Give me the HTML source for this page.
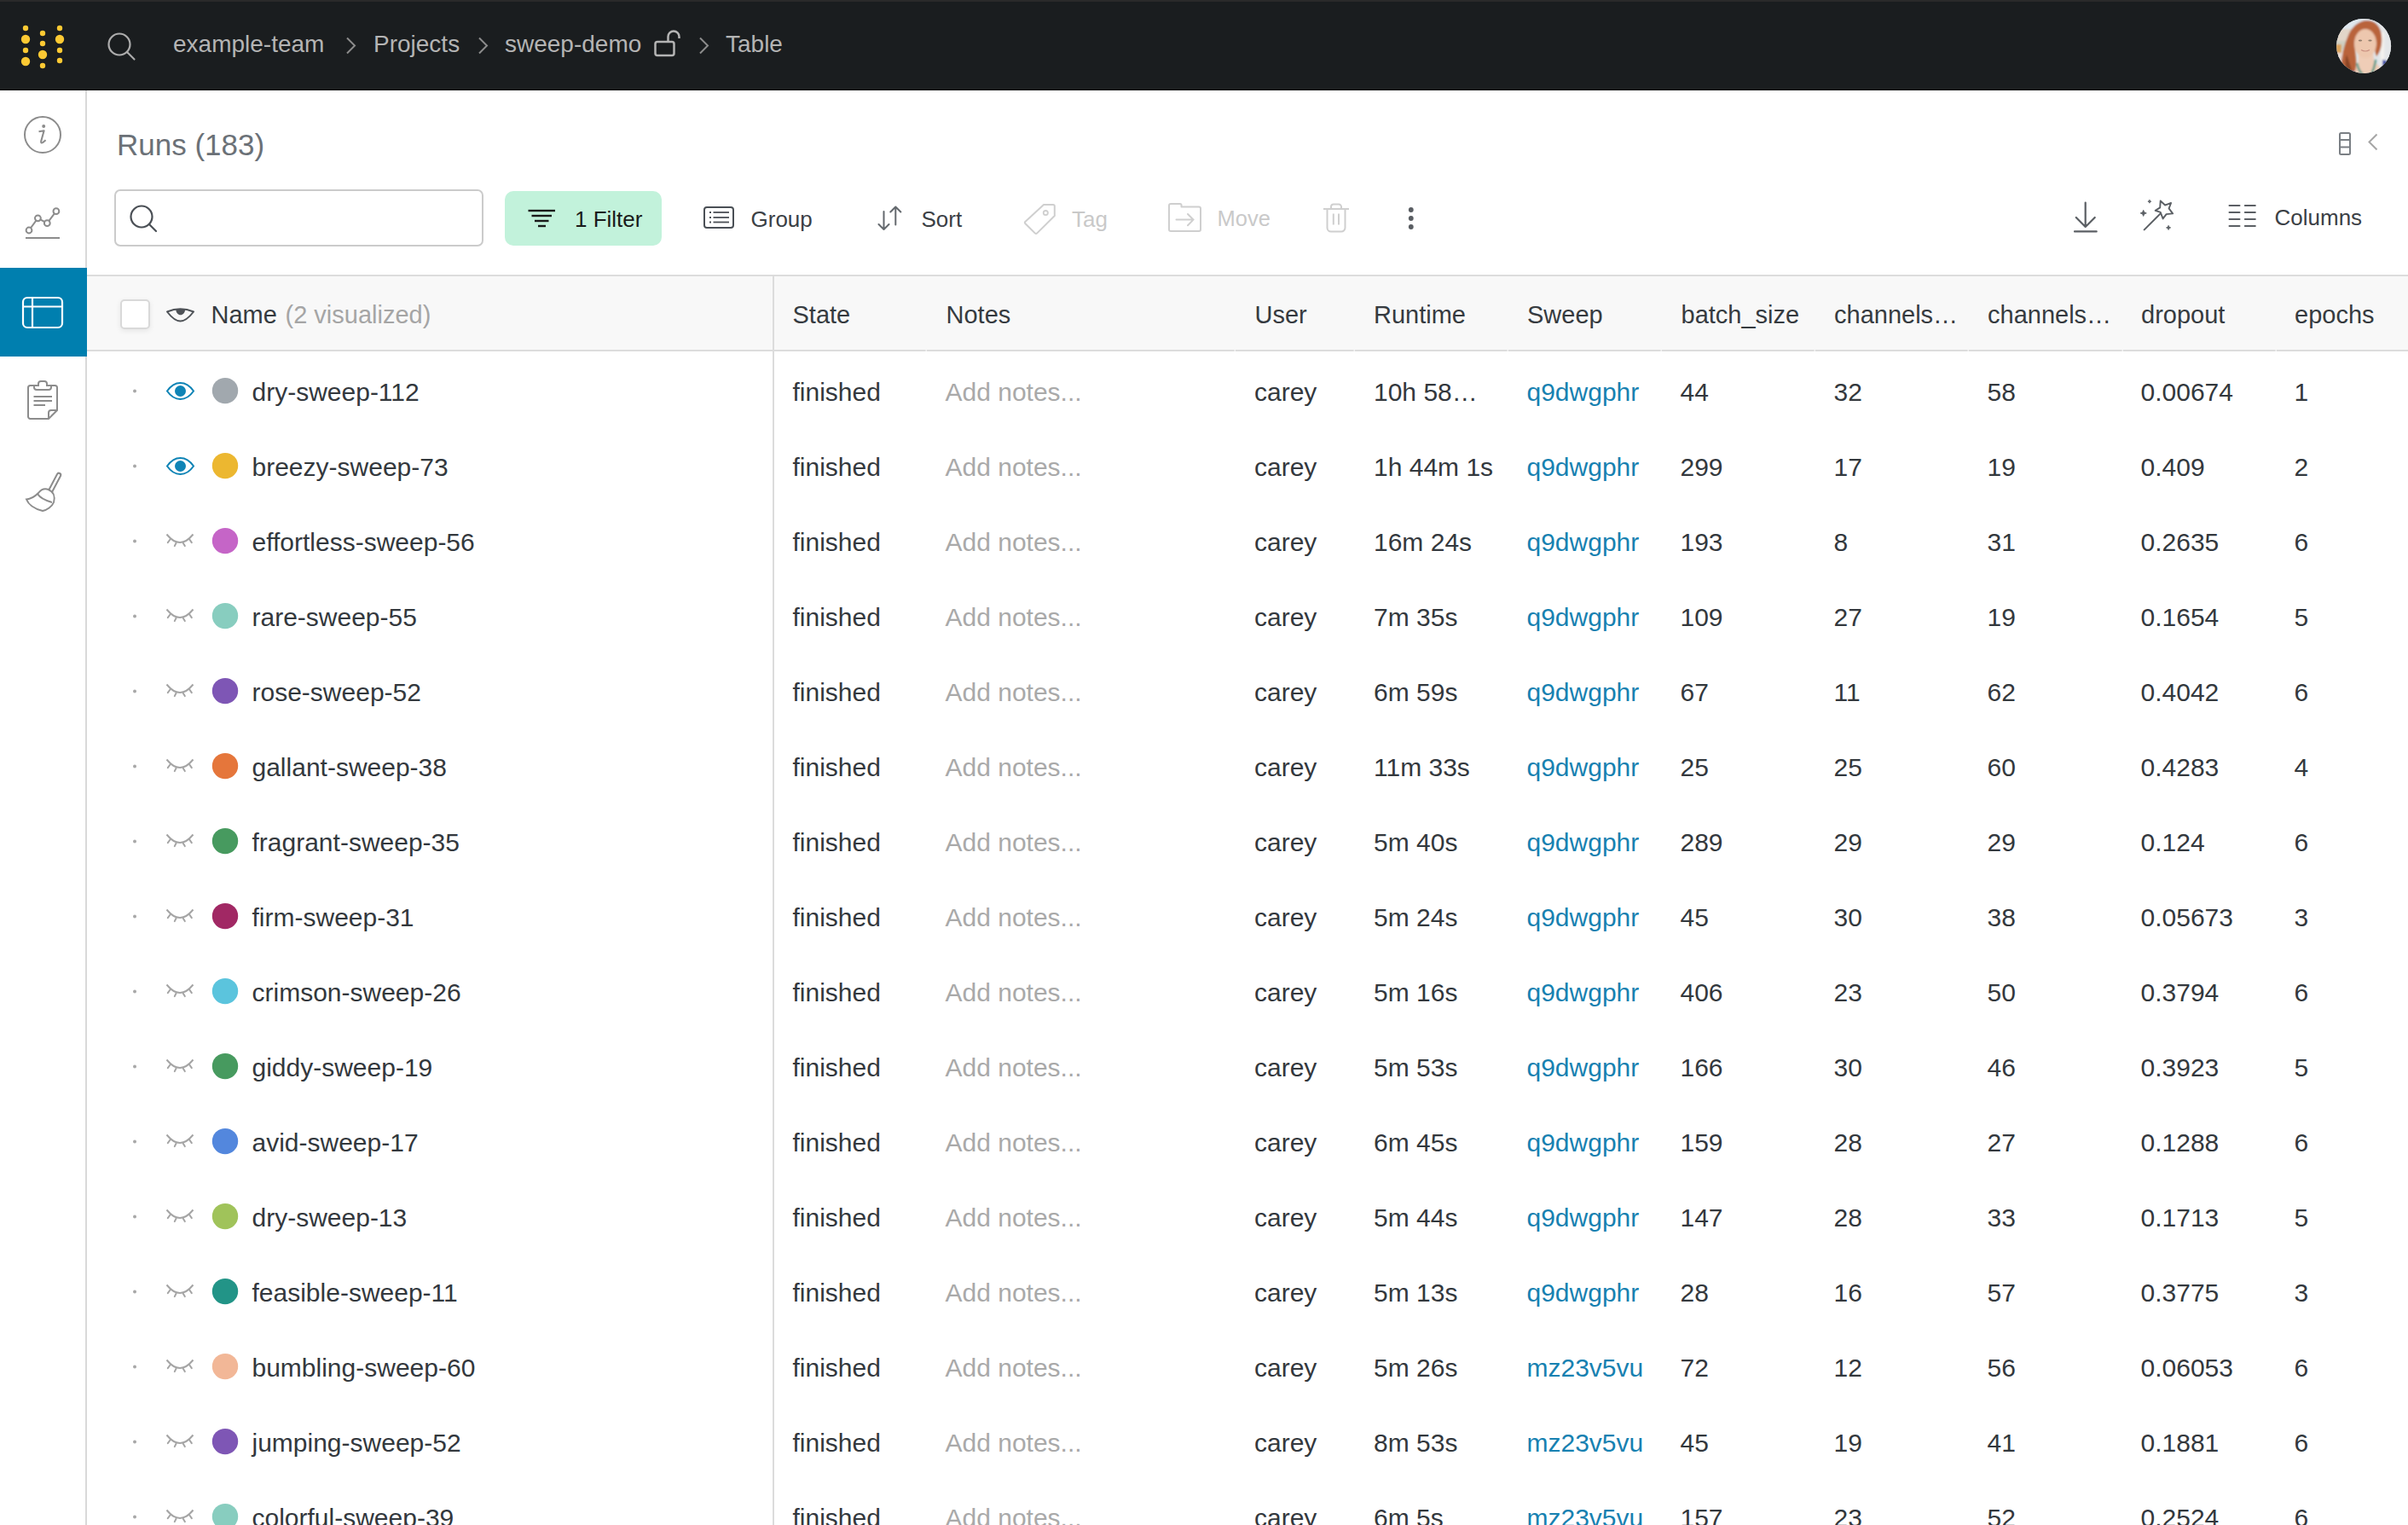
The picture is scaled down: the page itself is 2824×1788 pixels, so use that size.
<!DOCTYPE html>
<html><head><meta charset="utf-8"><style>
html,body{margin:0;padding:0;}
body{width:2824px;height:1788px;overflow:hidden;position:relative;background:#fff;font-family:"Liberation Sans",sans-serif;}
.b{position:absolute;}
.t{position:absolute;white-space:nowrap;}
svg{position:absolute;left:0;top:0;}
</style></head><body>
<div class="b" style="left:0;top:0;width:2824px;height:106px;background:#1a1d1f"></div>
<div class="b" style="left:0;top:0;width:2824px;height:2px;background:#2a2a2a"></div>
<div class="b" style="left:0;top:105px;width:2824px;height:1px;background:#0e1012"></div>
<svg width="72" height="72" viewBox="0 0 72 72" style="left:2736px;top:18px">
<defs><clipPath id="avc"><circle cx="36.1" cy="35.9" r="32"/></clipPath>
<filter id="avb" x="-20%" y="-20%" width="140%" height="140%"><feGaussianBlur stdDeviation="1.3"/></filter></defs>
<g clip-path="url(#avc)">
<rect x="0" y="0" width="72" height="72" fill="#dfe4e8"/>
<g filter="url(#avb)">
<rect x="0" y="0" width="72" height="16" fill="#dfe7ee"/>
<rect x="0" y="16" width="22" height="16" fill="#e2d6c8"/>
<rect x="0" y="30" width="18" height="10" fill="#cfd0c4"/>
<rect x="2" y="34" width="8" height="10" fill="#d9a25a"/>
<rect x="0" y="44" width="20" height="30" fill="#e9ddd6"/>
<rect x="54" y="10" width="20" height="50" fill="#e4e6e8"/>
<rect x="56" y="20" width="4" height="40" fill="#f4f2ee"/>
<path d="M10,72 C8,56 12,38 17,26 C21,14 30,6 40,6 C50,6 56,13 57,24 C58,34 56,42 51,48 L49,40 C50,32 49,22 40,17 C31,17 26,24 25.5,33 C25.5,42 28,52 27,60 C26.5,66 27,72 26,72 Z" fill="#b9643a"/>
<path d="M16,46 C19,54 21,62 25,72 L19,72 C15,62 13,54 16,46 Z" fill="#8a4528"/>
<path d="M30,42 L47,42 L48,54 C52,58 58,62 62,72 L24,72 C26,62 29,58 30,54 Z" fill="#efcdb7"/>
<ellipse cx="38" cy="33" rx="13" ry="17" fill="#edc7ae"/>
<path d="M58,52 L66,54 L66,72 L58,72 Z" fill="#3d4fa8"/>
<path d="M24,64 L26,72 L20,72 Z" fill="#3d4fa8"/>
<path d="M28,56 C30,64 32,68 36,70 M50,52 C49,60 47,66 44,70" fill="none" stroke="#5f9b8a" stroke-width="2.6"/>
</g>
<g fill="#7a6a5a" opacity="0.8"><ellipse cx="32" cy="29.5" rx="2.2" ry="0.9"/><ellipse cx="43.5" cy="29.5" rx="2.2" ry="0.9"/></g>
<path d="M33,40.5 Q38,43.5 43,40.5" fill="none" stroke="#c98f80" stroke-width="1.2"/>
</g>
</svg>
<div class="b" style="left:100px;top:106px;width:2px;height:1682px;background:#d9d9d9"></div>
<div class="b" style="left:0;top:314px;width:102px;height:104px;background:#007faf"></div>
<div class="b" style="left:134px;top:222px;width:433px;height:67px;box-sizing:border-box;border:2px solid #cbcbcb;border-radius:7px;"></div>
<div class="b" style="left:592px;top:224px;width:184px;height:64px;border-radius:10px;background:#c2f2db"></div>
<div class="b" style="left:102px;top:322px;width:2722px;height:90px;box-sizing:border-box;border-top:2px solid #dcdcdc;border-bottom:2px solid #dcdcdc;background:#f8f8f8"></div>
<div class="b" style="left:906px;top:322px;width:2px;height:1466px;background:#dcdcdc"></div>
<div class="b" style="left:140.5px;top:350.5px;width:35px;height:35px;box-sizing:border-box;border:2px solid #d9d9d9;border-radius:5px;background:#fff;box-shadow:0 2px 6px rgba(0,0,0,0.08)"></div>
<svg width="2824" height="1788" viewBox="0 0 2824 1788">
<circle cx="30" cy="33" r="3.2" fill="#fcc933"/>
<circle cx="30" cy="46" r="5.2" fill="#fcc933"/>
<circle cx="30" cy="59" r="3.2" fill="#fcc933"/>
<circle cx="30" cy="72" r="5.2" fill="#fcc933"/>
<circle cx="50" cy="39" r="3.2" fill="#fcc933"/>
<circle cx="50" cy="51" r="3.2" fill="#fcc933"/>
<circle cx="50" cy="64" r="5.2" fill="#fcc933"/>
<circle cx="50" cy="77" r="3.2" fill="#fcc933"/>
<circle cx="70" cy="33" r="3.2" fill="#fcc933"/>
<circle cx="70" cy="46" r="5.2" fill="#fcc933"/>
<circle cx="70" cy="59" r="3.2" fill="#fcc933"/>
<circle cx="70" cy="71" r="3.2" fill="#fcc933"/>
<circle cx="140" cy="52" r="12.5" fill="none" stroke="#adadad" stroke-width="2.2"/>
<line x1="149.5" y1="61.5" x2="157.5" y2="69.5" stroke="#adadad" stroke-width="2.2" stroke-linecap="round"/>
<polyline points="407,44.5 416,53.5 407,62.5" fill="none" stroke="#8c8c8c" stroke-width="2"/>
<polyline points="562,44.5 571,53.5 562,62.5" fill="none" stroke="#8c8c8c" stroke-width="2"/>
<polyline points="821,44.5 830,53.5 821,62.5" fill="none" stroke="#8c8c8c" stroke-width="2"/>
<rect x="768.5" y="49" width="22" height="16" rx="2.5" fill="none" stroke="#b4b4b4" stroke-width="2.5"/>
<path d="M783.5,49 V43 A6.5,6.5 0 0 1 796.5,43 V45" fill="none" stroke="#b4b4b4" stroke-width="2.5"/>
<circle cx="50" cy="158" r="21" fill="none" stroke="#8c8c8c" stroke-width="2"/>
<circle cx="51.2" cy="148" r="2" fill="#8c8c8c"/>
<path d="M45.5,154.3 L51.6,153.2 L48.2,165.5 Q47.6,168.6 50.6,166.8 L53.6,164.3" fill="none" stroke="#8c8c8c" stroke-width="2.1" stroke-linejoin="round"/>
<polyline points="34,270 44.4,255.8 55.3,261.7 65.9,247.7" fill="none" stroke="#8c8c8c" stroke-width="2"/>
<circle cx="34" cy="270" r="3.4" fill="#fff" stroke="#8c8c8c" stroke-width="2"/>
<circle cx="44.4" cy="255.8" r="3.4" fill="#fff" stroke="#8c8c8c" stroke-width="2"/>
<circle cx="55.3" cy="261.7" r="3.4" fill="#fff" stroke="#8c8c8c" stroke-width="2"/>
<circle cx="65.9" cy="247.7" r="3.4" fill="#fff" stroke="#8c8c8c" stroke-width="2"/>
<line x1="30" y1="279" x2="70" y2="279" stroke="#8c8c8c" stroke-width="2"/>
<rect x="27" y="349" width="46" height="35" rx="5" fill="none" stroke="#fff" stroke-width="2.2"/>
<line x1="38" y1="349" x2="38" y2="384" stroke="#fff" stroke-width="2.2"/>
<line x1="27" y1="359.5" x2="73" y2="359.5" stroke="#fff" stroke-width="2.2"/>
<path d="M40,452 H35.5 A2.5,2.5 0 0 0 33,454.5 V488.5 A2.5,2.5 0 0 0 35.5,491 H57 L67,481 V454.5 A2.5,2.5 0 0 0 64.5,452 H60" fill="none" stroke="#8c8c8c" stroke-width="2"/>
<path d="M40,452 V454 A3,3 0 0 0 43,457 H57 A3,3 0 0 0 60,454 V452 H55 V450 A3,3 0 0 0 52,447 H48 A3,3 0 0 0 45,450 V452 Z" fill="none" stroke="#8c8c8c" stroke-width="2"/>
<path d="M57,491 V484 A3,3 0 0 1 60,481 H67" fill="none" stroke="#8c8c8c" stroke-width="2"/>
<line x1="39.5" y1="465" x2="61" y2="465" stroke="#8c8c8c" stroke-width="2"/>
<line x1="39.5" y1="470" x2="61" y2="470" stroke="#8c8c8c" stroke-width="2"/>
<line x1="39.5" y1="475" x2="53" y2="475" stroke="#8c8c8c" stroke-width="2"/>
<path d="M57,575 L67,556 A2,2 0 0 1 71,558 L61,577" fill="none" stroke="#8c8c8c" stroke-width="2"/>
<path d="M31,585.5 C38,585 42,581 45,578 C48,574 52,572 57,574 C63,577 65,581 63,589 C61,594 55,598 50,599 C42,597 34,593 31,585.5 Z" fill="none" stroke="#8c8c8c" stroke-width="2"/>
<path d="M44,579 C47,584 54,587 61,589" fill="none" stroke="#8c8c8c" stroke-width="2"/>
<circle cx="166" cy="254" r="12.5" fill="none" stroke="#4a4f55" stroke-width="2.2"/>
<line x1="175" y1="263" x2="183" y2="271" stroke="#4a4f55" stroke-width="2.2" stroke-linecap="round"/>
<line x1="619.5" y1="247" x2="651" y2="247" stroke="#1a1a1a" stroke-width="2.4"/>
<line x1="623.5" y1="253" x2="647" y2="253" stroke="#1a1a1a" stroke-width="2.4"/>
<line x1="627" y1="259" x2="643.5" y2="259" stroke="#1a1a1a" stroke-width="2.4"/>
<line x1="631" y1="265" x2="640" y2="265" stroke="#1a1a1a" stroke-width="2.4"/>
<rect x="826" y="243" width="34" height="24" rx="3" fill="none" stroke="#4a4f55" stroke-width="2"/>
<line x1="832" y1="249" x2="834" y2="249" stroke="#4a4f55" stroke-width="1.8"/>
<line x1="836.5" y1="249" x2="855" y2="249" stroke="#4a4f55" stroke-width="1.8"/>
<line x1="832" y1="255" x2="834" y2="255" stroke="#4a4f55" stroke-width="1.8"/>
<line x1="836.5" y1="255" x2="855" y2="255" stroke="#4a4f55" stroke-width="1.8"/>
<line x1="832" y1="260.5" x2="834" y2="260.5" stroke="#4a4f55" stroke-width="1.8"/>
<line x1="836.5" y1="260.5" x2="855" y2="260.5" stroke="#4a4f55" stroke-width="1.8"/>
<path d="M1036.5,248 V269 M1030.5,263 L1036.5,269 L1042.5,263" fill="none" stroke="#64696e" stroke-width="2" stroke-linecap="round" stroke-linejoin="round"/>
<path d="M1050.3,263.5 V242.5 M1044.3,248.5 L1050.3,242.5 L1056.3,248.5" fill="none" stroke="#64696e" stroke-width="2" stroke-linecap="round" stroke-linejoin="round"/>
<path d="M1224,240 L1235,240 A1.8,1.8 0 0 1 1236.8,241.8 L1236.8,253 L1216,273.6 A1.5,1.5 0 0 1 1214,273.6 L1202.3,262 A1.5,1.5 0 0 1 1202.3,260 Z" fill="none" stroke="#cfcfcf" stroke-width="2" stroke-linejoin="round"/>
<circle cx="1226.3" cy="249.6" r="2.6" fill="none" stroke="#cfcfcf" stroke-width="1.8"/>
<path d="M1373,239 H1384 A1.5,1.5 0 0 1 1385.5,240.5 V242.5 H1406 A2,2 0 0 1 1408,244.5 V269 A2,2 0 0 1 1406,271 H1373 A2,2 0 0 1 1371,269 V241 A2,2 0 0 1 1373,239 Z" fill="none" stroke="#cfcfcf" stroke-width="2" stroke-linejoin="round"/>
<path d="M1379.5,257.6 H1399.5 M1393,251 L1399.5,257.6 L1393,264.2" fill="none" stroke="#cfcfcf" stroke-width="2" stroke-linecap="round"/>
<path d="M1556.5,245 V267 A4.5,4.5 0 0 0 1561,271.5 H1573 A4.5,4.5 0 0 0 1577.5,267 V245 M1552,245 H1582 M1561,244.5 V242.5 A3,3 0 0 1 1564,239.5 H1570 A3,3 0 0 1 1573,242.5 V244.5 M1563.8,250.5 V263.5 M1570,250.5 V263.5" fill="none" stroke="#cfcfcf" stroke-width="2"/>
<circle cx="1654.8" cy="246" r="2.9" fill="#595d62"/>
<circle cx="1654.8" cy="256" r="2.9" fill="#595d62"/>
<circle cx="1654.8" cy="266" r="2.9" fill="#595d62"/>
<path d="M2445.7,237.5 V266 M2434.8,255 L2445.7,266 L2456.7,255 M2433,271.4 H2458.7" fill="none" stroke="#5b5f64" stroke-width="2.2" stroke-linecap="round" stroke-linejoin="round"/>
<path d="M2514.7,269.4 L2533.7,250.4" fill="none" stroke="#5b5f64" stroke-width="2" stroke-linecap="round"/>
<path d="M2533.7,235.5 L2539.1,240.5 L2546.1,238 L2543.6,244.4 L2548.1,250.4 L2540.6,251.1 L2536.6,256.4 L2533.7,248.9 L2527.7,246.9 L2533.2,243.4 Z" fill="none" stroke="#5b5f64" stroke-width="1.9" stroke-linejoin="round"/>
<path d="M2513.7,246.3 L2514.7799999999997,248.82 L2517.2999999999997,249.9 L2514.7799999999997,250.98000000000002 L2513.7,253.5 L2512.62,250.98000000000002 L2510.1,249.9 L2512.62,248.82 Z" fill="#5b5f64" stroke="#5b5f64" stroke-width="0.8" stroke-linejoin="round"/>
<path d="M2520.9,234.2 L2521.5,235.6 L2522.9,236.2 L2521.5,236.79999999999998 L2520.9,238.2 L2520.3,236.79999999999998 L2518.9,236.2 L2520.3,235.6 Z" fill="#5b5f64" stroke="#5b5f64" stroke-width="0.8" stroke-linejoin="round"/>
<path d="M2543.1,264.29999999999995 L2543.88,266.12 L2545.7,266.9 L2543.88,267.67999999999995 L2543.1,269.5 L2542.3199999999997,267.67999999999995 L2540.5,266.9 L2542.3199999999997,266.12 Z" fill="#5b5f64" stroke="#5b5f64" stroke-width="0.8" stroke-linejoin="round"/>
<line x1="2614.5" y1="241" x2="2626.5" y2="241" stroke="#5b5f64" stroke-width="2" stroke-linecap="round"/>
<line x1="2632.8" y1="241" x2="2644.8" y2="241" stroke="#5b5f64" stroke-width="2" stroke-linecap="round"/>
<line x1="2614.5" y1="249" x2="2626.5" y2="249" stroke="#5b5f64" stroke-width="2" stroke-linecap="round"/>
<line x1="2632.8" y1="249" x2="2644.8" y2="249" stroke="#5b5f64" stroke-width="2" stroke-linecap="round"/>
<line x1="2614.5" y1="257" x2="2626.5" y2="257" stroke="#5b5f64" stroke-width="2" stroke-linecap="round"/>
<line x1="2632.8" y1="257" x2="2644.8" y2="257" stroke="#5b5f64" stroke-width="2" stroke-linecap="round"/>
<line x1="2614.5" y1="265" x2="2626.5" y2="265" stroke="#5b5f64" stroke-width="2" stroke-linecap="round"/>
<line x1="2632.8" y1="265" x2="2644.8" y2="265" stroke="#5b5f64" stroke-width="2" stroke-linecap="round"/>
<rect x="2744" y="156" width="12" height="25" rx="1.5" fill="none" stroke="#7a7f84" stroke-width="2"/>
<line x1="2744" y1="164" x2="2756" y2="164" stroke="#7a7f84" stroke-width="2"/>
<line x1="2744" y1="172.5" x2="2756" y2="172.5" stroke="#7a7f84" stroke-width="2"/>
<polyline points="2787.5,157.5 2778.5,166.5 2787.5,175.5" fill="none" stroke="#a6a6a6" stroke-width="2"/>
<path d="M196,365.5 Q211.5,359 227,365.5 C222,372 217,376.5 211.5,376.5 C206,376.5 201,372 196,365.5 Z" fill="none" stroke="#4f5358" stroke-width="2" stroke-linejoin="round"/>
<path d="M206.3,362.5 C206.3,371.5 217.1,371.5 217.1,362.5 Z" fill="#4f5358"/>
<rect x="1085.5" y="410" width="1.5" height="2" fill="#f2f2f2"/>
<rect x="1447.5" y="410" width="1.5" height="2" fill="#f2f2f2"/>
<rect x="1587.5" y="410" width="1.5" height="2" fill="#f2f2f2"/>
<rect x="1767.5" y="410" width="1.5" height="2" fill="#f2f2f2"/>
<rect x="1947.5" y="410" width="1.5" height="2" fill="#f2f2f2"/>
<rect x="2127.5" y="410" width="1.5" height="2" fill="#f2f2f2"/>
<rect x="2307.5" y="410" width="1.5" height="2" fill="#f2f2f2"/>
<rect x="2488.5" y="410" width="1.5" height="2" fill="#f2f2f2"/>
<rect x="2668.5" y="410" width="1.5" height="2" fill="#f2f2f2"/>
<circle cx="158" cy="458.5" r="2" fill="#a8a8a8"/>
<path d="M196,458.5 C200.5,452.0 205.5,449.0 211.5,449.0 C217.5,449.0 222.5,452.0 227,458.5 C222.5,465.0 217.5,468.0 211.5,468.0 C205.5,468.0 200.5,465.0 196,458.5 Z" fill="none" stroke="#0f84b6" stroke-width="2"/>
<circle cx="211.5" cy="458.5" r="6.5" fill="#0f84b6"/>
<circle cx="264" cy="458.1" r="15.2" fill="#a1a8ae"/>
<circle cx="158" cy="546.5" r="2" fill="#a8a8a8"/>
<path d="M196,546.5 C200.5,540.0 205.5,537.0 211.5,537.0 C217.5,537.0 222.5,540.0 227,546.5 C222.5,553.0 217.5,556.0 211.5,556.0 C205.5,556.0 200.5,553.0 196,546.5 Z" fill="none" stroke="#0f84b6" stroke-width="2"/>
<circle cx="211.5" cy="546.5" r="6.5" fill="#0f84b6"/>
<circle cx="264" cy="546.1" r="15.2" fill="#ecb730"/>
<circle cx="158" cy="634.5" r="2" fill="#a8a8a8"/>
<path d="M195.5,626.5 Q211,645.5 226.5,626.5" fill="none" stroke="#a5a5a5" stroke-width="2"/><path d="M199.5,632.5 L196.8,636.1 M206.5,636.8 L204.8,640.1 M214.8,636.8 L216.8,640.1 M222.1,632.2 L224.8,636.1" stroke="#a5a5a5" stroke-width="2" stroke-linecap="round"/>
<circle cx="264" cy="634.1" r="15.2" fill="#c565c7"/>
<circle cx="158" cy="722.5" r="2" fill="#a8a8a8"/>
<path d="M195.5,714.5 Q211,733.5 226.5,714.5" fill="none" stroke="#a5a5a5" stroke-width="2"/><path d="M199.5,720.5 L196.8,724.1 M206.5,724.8 L204.8,728.1 M214.8,724.8 L216.8,728.1 M222.1,720.2 L224.8,724.1" stroke="#a5a5a5" stroke-width="2" stroke-linecap="round"/>
<circle cx="264" cy="722.1" r="15.2" fill="#88cdbf"/>
<circle cx="158" cy="810.5" r="2" fill="#a8a8a8"/>
<path d="M195.5,802.5 Q211,821.5 226.5,802.5" fill="none" stroke="#a5a5a5" stroke-width="2"/><path d="M199.5,808.5 L196.8,812.1 M206.5,812.8 L204.8,816.1 M214.8,812.8 L216.8,816.1 M222.1,808.2 L224.8,812.1" stroke="#a5a5a5" stroke-width="2" stroke-linecap="round"/>
<circle cx="264" cy="810.1" r="15.2" fill="#7e56b5"/>
<circle cx="158" cy="898.5" r="2" fill="#a8a8a8"/>
<path d="M195.5,890.5 Q211,909.5 226.5,890.5" fill="none" stroke="#a5a5a5" stroke-width="2"/><path d="M199.5,896.5 L196.8,900.1 M206.5,900.8 L204.8,904.1 M214.8,900.8 L216.8,904.1 M222.1,896.2 L224.8,900.1" stroke="#a5a5a5" stroke-width="2" stroke-linecap="round"/>
<circle cx="264" cy="898.1" r="15.2" fill="#e5763b"/>
<circle cx="158" cy="986.5" r="2" fill="#a8a8a8"/>
<path d="M195.5,978.5 Q211,997.5 226.5,978.5" fill="none" stroke="#a5a5a5" stroke-width="2"/><path d="M199.5,984.5 L196.8,988.1 M206.5,988.8 L204.8,992.1 M214.8,988.8 L216.8,992.1 M222.1,984.2 L224.8,988.1" stroke="#a5a5a5" stroke-width="2" stroke-linecap="round"/>
<circle cx="264" cy="986.1" r="15.2" fill="#479a5f"/>
<circle cx="158" cy="1074.5" r="2" fill="#a8a8a8"/>
<path d="M195.5,1066.5 Q211,1085.5 226.5,1066.5" fill="none" stroke="#a5a5a5" stroke-width="2"/><path d="M199.5,1072.5 L196.8,1076.1 M206.5,1076.8 L204.8,1080.1 M214.8,1076.8 L216.8,1080.1 M222.1,1072.2 L224.8,1076.1" stroke="#a5a5a5" stroke-width="2" stroke-linecap="round"/>
<circle cx="264" cy="1074.1" r="15.2" fill="#a12864"/>
<circle cx="158" cy="1162.5" r="2" fill="#a8a8a8"/>
<path d="M195.5,1154.5 Q211,1173.5 226.5,1154.5" fill="none" stroke="#a5a5a5" stroke-width="2"/><path d="M199.5,1160.5 L196.8,1164.1 M206.5,1164.8 L204.8,1168.1 M214.8,1164.8 L216.8,1168.1 M222.1,1160.2 L224.8,1164.1" stroke="#a5a5a5" stroke-width="2" stroke-linecap="round"/>
<circle cx="264" cy="1162.1" r="15.2" fill="#5bc4dd"/>
<circle cx="158" cy="1250.5" r="2" fill="#a8a8a8"/>
<path d="M195.5,1242.5 Q211,1261.5 226.5,1242.5" fill="none" stroke="#a5a5a5" stroke-width="2"/><path d="M199.5,1248.5 L196.8,1252.1 M206.5,1252.8 L204.8,1256.1 M214.8,1252.8 L216.8,1256.1 M222.1,1248.2 L224.8,1252.1" stroke="#a5a5a5" stroke-width="2" stroke-linecap="round"/>
<circle cx="264" cy="1250.1" r="15.2" fill="#479a5f"/>
<circle cx="158" cy="1338.5" r="2" fill="#a8a8a8"/>
<path d="M195.5,1330.5 Q211,1349.5 226.5,1330.5" fill="none" stroke="#a5a5a5" stroke-width="2"/><path d="M199.5,1336.5 L196.8,1340.1 M206.5,1340.8 L204.8,1344.1 M214.8,1340.8 L216.8,1344.1 M222.1,1336.2 L224.8,1340.1" stroke="#a5a5a5" stroke-width="2" stroke-linecap="round"/>
<circle cx="264" cy="1338.1" r="15.2" fill="#5387dd"/>
<circle cx="158" cy="1426.5" r="2" fill="#a8a8a8"/>
<path d="M195.5,1418.5 Q211,1437.5 226.5,1418.5" fill="none" stroke="#a5a5a5" stroke-width="2"/><path d="M199.5,1424.5 L196.8,1428.1 M206.5,1428.8 L204.8,1432.1 M214.8,1428.8 L216.8,1432.1 M222.1,1424.2 L224.8,1428.1" stroke="#a5a5a5" stroke-width="2" stroke-linecap="round"/>
<circle cx="264" cy="1426.1" r="15.2" fill="#a0c35a"/>
<circle cx="158" cy="1514.5" r="2" fill="#a8a8a8"/>
<path d="M195.5,1506.5 Q211,1525.5 226.5,1506.5" fill="none" stroke="#a5a5a5" stroke-width="2"/><path d="M199.5,1512.5 L196.8,1516.1 M206.5,1516.8 L204.8,1520.1 M214.8,1516.8 L216.8,1520.1 M222.1,1512.2 L224.8,1516.1" stroke="#a5a5a5" stroke-width="2" stroke-linecap="round"/>
<circle cx="264" cy="1514.1" r="15.2" fill="#229487"/>
<circle cx="158" cy="1602.5" r="2" fill="#a8a8a8"/>
<path d="M195.5,1594.5 Q211,1613.5 226.5,1594.5" fill="none" stroke="#a5a5a5" stroke-width="2"/><path d="M199.5,1600.5 L196.8,1604.1 M206.5,1604.8 L204.8,1608.1 M214.8,1604.8 L216.8,1608.1 M222.1,1600.2 L224.8,1604.1" stroke="#a5a5a5" stroke-width="2" stroke-linecap="round"/>
<circle cx="264" cy="1602.1" r="15.2" fill="#f2b797"/>
<circle cx="158" cy="1690.5" r="2" fill="#a8a8a8"/>
<path d="M195.5,1682.5 Q211,1701.5 226.5,1682.5" fill="none" stroke="#a5a5a5" stroke-width="2"/><path d="M199.5,1688.5 L196.8,1692.1 M206.5,1692.8 L204.8,1696.1 M214.8,1692.8 L216.8,1696.1 M222.1,1688.2 L224.8,1692.1" stroke="#a5a5a5" stroke-width="2" stroke-linecap="round"/>
<circle cx="264" cy="1690.1" r="15.2" fill="#7e56b5"/>
<circle cx="158" cy="1778.5" r="2" fill="#a8a8a8"/>
<path d="M195.5,1770.5 Q211,1789.5 226.5,1770.5" fill="none" stroke="#a5a5a5" stroke-width="2"/><path d="M199.5,1776.5 L196.8,1780.1 M206.5,1780.8 L204.8,1784.1 M214.8,1780.8 L216.8,1784.1 M222.1,1776.2 L224.8,1780.1" stroke="#a5a5a5" stroke-width="2" stroke-linecap="round"/>
<circle cx="264" cy="1778.1" r="15.2" fill="#88cdbf"/>
</svg>
<div class="t" style="left:203px;top:38.3px;font-size:28px;line-height:28px;color:#b4b4b4;">example-team</div>
<div class="t" style="left:438px;top:38.3px;font-size:28px;line-height:28px;color:#b4b4b4;">Projects</div>
<div class="t" style="left:592px;top:38.3px;font-size:28px;line-height:28px;color:#b4b4b4;">sweep-demo</div>
<div class="t" style="left:851px;top:38.3px;font-size:28px;line-height:28px;color:#b4b4b4;">Table</div>
<div class="t" style="left:137px;top:152.4px;font-size:35px;line-height:35px;color:#6b7177;">Runs (183)</div>
<div class="t" style="left:674px;top:244.0px;font-size:26px;line-height:26px;color:#1a1a1a;">1 Filter</div>
<div class="t" style="left:880.5px;top:244.0px;font-size:26px;line-height:26px;color:#3b4045;">Group</div>
<div class="t" style="left:1080.5px;top:244.0px;font-size:26px;line-height:26px;color:#3b4045;">Sort</div>
<div class="t" style="left:1257px;top:244.0px;font-size:26px;line-height:26px;color:#c9c9c9;">Tag</div>
<div class="t" style="left:1427.5px;top:244.4px;font-size:25.5px;line-height:25.5px;color:#c9c9c9;">Move</div>
<div class="t" style="left:2667.5px;top:242.0px;font-size:26px;line-height:26px;color:#3b4045;">Columns</div>
<div class="t" style="left:247.5px;top:355.4px;font-size:29px;line-height:29px;color:#363b40;">Name</div>
<div class="t" style="left:334.5px;top:355.4px;font-size:29px;line-height:29px;color:#a5a5a5;">(2 visualized)</div>
<div class="t" style="left:929.5px;top:355.4px;font-size:29px;line-height:29px;color:#363b40;">State</div>
<div class="t" style="left:1109.5px;top:355.4px;font-size:29px;line-height:29px;color:#363b40;">Notes</div>
<div class="t" style="left:1471.5px;top:355.4px;font-size:29px;line-height:29px;color:#363b40;">User</div>
<div class="t" style="left:1611px;top:355.4px;font-size:29px;line-height:29px;color:#363b40;">Runtime</div>
<div class="t" style="left:1791px;top:355.4px;font-size:29px;line-height:29px;color:#363b40;">Sweep</div>
<div class="t" style="left:1971.5px;top:355.4px;font-size:29px;line-height:29px;color:#363b40;">batch_size</div>
<div class="t" style="left:2151px;top:355.4px;font-size:29px;line-height:29px;color:#363b40;">channels…</div>
<div class="t" style="left:2331px;top:355.4px;font-size:29px;line-height:29px;color:#363b40;">channels…</div>
<div class="t" style="left:2511px;top:355.4px;font-size:29px;line-height:29px;color:#363b40;">dropout</div>
<div class="t" style="left:2691px;top:355.4px;font-size:29px;line-height:29px;color:#363b40;">epochs</div>
<div class="t" style="left:295.5px;top:444.6px;font-size:30px;line-height:30px;color:#33383d;">dry-sweep-112</div>
<div class="t" style="left:929.5px;top:444.6px;font-size:30px;line-height:30px;color:#33383d;">finished</div>
<div class="t" style="left:1108.5px;top:444.6px;font-size:30px;line-height:30px;color:#a9a9a9;">Add notes...</div>
<div class="t" style="left:1471px;top:444.6px;font-size:30px;line-height:30px;color:#33383d;">carey</div>
<div class="t" style="left:1611px;top:444.6px;font-size:30px;line-height:30px;color:#33383d;">10h 58…</div>
<div class="t" style="left:1790.5px;top:444.6px;font-size:30px;line-height:30px;color:#1781b1;">q9dwgphr</div>
<div class="t" style="left:1970.5px;top:444.6px;font-size:30px;line-height:30px;color:#33383d;">44</div>
<div class="t" style="left:2150.5px;top:444.6px;font-size:30px;line-height:30px;color:#33383d;">32</div>
<div class="t" style="left:2330.5px;top:444.6px;font-size:30px;line-height:30px;color:#33383d;">58</div>
<div class="t" style="left:2510.5px;top:444.6px;font-size:30px;line-height:30px;color:#33383d;">0.00674</div>
<div class="t" style="left:2690.5px;top:444.6px;font-size:30px;line-height:30px;color:#33383d;">1</div>
<div class="t" style="left:295.5px;top:532.6px;font-size:30px;line-height:30px;color:#33383d;">breezy-sweep-73</div>
<div class="t" style="left:929.5px;top:532.6px;font-size:30px;line-height:30px;color:#33383d;">finished</div>
<div class="t" style="left:1108.5px;top:532.6px;font-size:30px;line-height:30px;color:#a9a9a9;">Add notes...</div>
<div class="t" style="left:1471px;top:532.6px;font-size:30px;line-height:30px;color:#33383d;">carey</div>
<div class="t" style="left:1611px;top:532.6px;font-size:30px;line-height:30px;color:#33383d;">1h 44m 1s</div>
<div class="t" style="left:1790.5px;top:532.6px;font-size:30px;line-height:30px;color:#1781b1;">q9dwgphr</div>
<div class="t" style="left:1970.5px;top:532.6px;font-size:30px;line-height:30px;color:#33383d;">299</div>
<div class="t" style="left:2150.5px;top:532.6px;font-size:30px;line-height:30px;color:#33383d;">17</div>
<div class="t" style="left:2330.5px;top:532.6px;font-size:30px;line-height:30px;color:#33383d;">19</div>
<div class="t" style="left:2510.5px;top:532.6px;font-size:30px;line-height:30px;color:#33383d;">0.409</div>
<div class="t" style="left:2690.5px;top:532.6px;font-size:30px;line-height:30px;color:#33383d;">2</div>
<div class="t" style="left:295.5px;top:620.6px;font-size:30px;line-height:30px;color:#33383d;">effortless-sweep-56</div>
<div class="t" style="left:929.5px;top:620.6px;font-size:30px;line-height:30px;color:#33383d;">finished</div>
<div class="t" style="left:1108.5px;top:620.6px;font-size:30px;line-height:30px;color:#a9a9a9;">Add notes...</div>
<div class="t" style="left:1471px;top:620.6px;font-size:30px;line-height:30px;color:#33383d;">carey</div>
<div class="t" style="left:1611px;top:620.6px;font-size:30px;line-height:30px;color:#33383d;">16m 24s</div>
<div class="t" style="left:1790.5px;top:620.6px;font-size:30px;line-height:30px;color:#1781b1;">q9dwgphr</div>
<div class="t" style="left:1970.5px;top:620.6px;font-size:30px;line-height:30px;color:#33383d;">193</div>
<div class="t" style="left:2150.5px;top:620.6px;font-size:30px;line-height:30px;color:#33383d;">8</div>
<div class="t" style="left:2330.5px;top:620.6px;font-size:30px;line-height:30px;color:#33383d;">31</div>
<div class="t" style="left:2510.5px;top:620.6px;font-size:30px;line-height:30px;color:#33383d;">0.2635</div>
<div class="t" style="left:2690.5px;top:620.6px;font-size:30px;line-height:30px;color:#33383d;">6</div>
<div class="t" style="left:295.5px;top:708.6px;font-size:30px;line-height:30px;color:#33383d;">rare-sweep-55</div>
<div class="t" style="left:929.5px;top:708.6px;font-size:30px;line-height:30px;color:#33383d;">finished</div>
<div class="t" style="left:1108.5px;top:708.6px;font-size:30px;line-height:30px;color:#a9a9a9;">Add notes...</div>
<div class="t" style="left:1471px;top:708.6px;font-size:30px;line-height:30px;color:#33383d;">carey</div>
<div class="t" style="left:1611px;top:708.6px;font-size:30px;line-height:30px;color:#33383d;">7m 35s</div>
<div class="t" style="left:1790.5px;top:708.6px;font-size:30px;line-height:30px;color:#1781b1;">q9dwgphr</div>
<div class="t" style="left:1970.5px;top:708.6px;font-size:30px;line-height:30px;color:#33383d;">109</div>
<div class="t" style="left:2150.5px;top:708.6px;font-size:30px;line-height:30px;color:#33383d;">27</div>
<div class="t" style="left:2330.5px;top:708.6px;font-size:30px;line-height:30px;color:#33383d;">19</div>
<div class="t" style="left:2510.5px;top:708.6px;font-size:30px;line-height:30px;color:#33383d;">0.1654</div>
<div class="t" style="left:2690.5px;top:708.6px;font-size:30px;line-height:30px;color:#33383d;">5</div>
<div class="t" style="left:295.5px;top:796.6px;font-size:30px;line-height:30px;color:#33383d;">rose-sweep-52</div>
<div class="t" style="left:929.5px;top:796.6px;font-size:30px;line-height:30px;color:#33383d;">finished</div>
<div class="t" style="left:1108.5px;top:796.6px;font-size:30px;line-height:30px;color:#a9a9a9;">Add notes...</div>
<div class="t" style="left:1471px;top:796.6px;font-size:30px;line-height:30px;color:#33383d;">carey</div>
<div class="t" style="left:1611px;top:796.6px;font-size:30px;line-height:30px;color:#33383d;">6m 59s</div>
<div class="t" style="left:1790.5px;top:796.6px;font-size:30px;line-height:30px;color:#1781b1;">q9dwgphr</div>
<div class="t" style="left:1970.5px;top:796.6px;font-size:30px;line-height:30px;color:#33383d;">67</div>
<div class="t" style="left:2150.5px;top:796.6px;font-size:30px;line-height:30px;color:#33383d;">11</div>
<div class="t" style="left:2330.5px;top:796.6px;font-size:30px;line-height:30px;color:#33383d;">62</div>
<div class="t" style="left:2510.5px;top:796.6px;font-size:30px;line-height:30px;color:#33383d;">0.4042</div>
<div class="t" style="left:2690.5px;top:796.6px;font-size:30px;line-height:30px;color:#33383d;">6</div>
<div class="t" style="left:295.5px;top:884.6px;font-size:30px;line-height:30px;color:#33383d;">gallant-sweep-38</div>
<div class="t" style="left:929.5px;top:884.6px;font-size:30px;line-height:30px;color:#33383d;">finished</div>
<div class="t" style="left:1108.5px;top:884.6px;font-size:30px;line-height:30px;color:#a9a9a9;">Add notes...</div>
<div class="t" style="left:1471px;top:884.6px;font-size:30px;line-height:30px;color:#33383d;">carey</div>
<div class="t" style="left:1611px;top:884.6px;font-size:30px;line-height:30px;color:#33383d;">11m 33s</div>
<div class="t" style="left:1790.5px;top:884.6px;font-size:30px;line-height:30px;color:#1781b1;">q9dwgphr</div>
<div class="t" style="left:1970.5px;top:884.6px;font-size:30px;line-height:30px;color:#33383d;">25</div>
<div class="t" style="left:2150.5px;top:884.6px;font-size:30px;line-height:30px;color:#33383d;">25</div>
<div class="t" style="left:2330.5px;top:884.6px;font-size:30px;line-height:30px;color:#33383d;">60</div>
<div class="t" style="left:2510.5px;top:884.6px;font-size:30px;line-height:30px;color:#33383d;">0.4283</div>
<div class="t" style="left:2690.5px;top:884.6px;font-size:30px;line-height:30px;color:#33383d;">4</div>
<div class="t" style="left:295.5px;top:972.6px;font-size:30px;line-height:30px;color:#33383d;">fragrant-sweep-35</div>
<div class="t" style="left:929.5px;top:972.6px;font-size:30px;line-height:30px;color:#33383d;">finished</div>
<div class="t" style="left:1108.5px;top:972.6px;font-size:30px;line-height:30px;color:#a9a9a9;">Add notes...</div>
<div class="t" style="left:1471px;top:972.6px;font-size:30px;line-height:30px;color:#33383d;">carey</div>
<div class="t" style="left:1611px;top:972.6px;font-size:30px;line-height:30px;color:#33383d;">5m 40s</div>
<div class="t" style="left:1790.5px;top:972.6px;font-size:30px;line-height:30px;color:#1781b1;">q9dwgphr</div>
<div class="t" style="left:1970.5px;top:972.6px;font-size:30px;line-height:30px;color:#33383d;">289</div>
<div class="t" style="left:2150.5px;top:972.6px;font-size:30px;line-height:30px;color:#33383d;">29</div>
<div class="t" style="left:2330.5px;top:972.6px;font-size:30px;line-height:30px;color:#33383d;">29</div>
<div class="t" style="left:2510.5px;top:972.6px;font-size:30px;line-height:30px;color:#33383d;">0.124</div>
<div class="t" style="left:2690.5px;top:972.6px;font-size:30px;line-height:30px;color:#33383d;">6</div>
<div class="t" style="left:295.5px;top:1060.6px;font-size:30px;line-height:30px;color:#33383d;">firm-sweep-31</div>
<div class="t" style="left:929.5px;top:1060.6px;font-size:30px;line-height:30px;color:#33383d;">finished</div>
<div class="t" style="left:1108.5px;top:1060.6px;font-size:30px;line-height:30px;color:#a9a9a9;">Add notes...</div>
<div class="t" style="left:1471px;top:1060.6px;font-size:30px;line-height:30px;color:#33383d;">carey</div>
<div class="t" style="left:1611px;top:1060.6px;font-size:30px;line-height:30px;color:#33383d;">5m 24s</div>
<div class="t" style="left:1790.5px;top:1060.6px;font-size:30px;line-height:30px;color:#1781b1;">q9dwgphr</div>
<div class="t" style="left:1970.5px;top:1060.6px;font-size:30px;line-height:30px;color:#33383d;">45</div>
<div class="t" style="left:2150.5px;top:1060.6px;font-size:30px;line-height:30px;color:#33383d;">30</div>
<div class="t" style="left:2330.5px;top:1060.6px;font-size:30px;line-height:30px;color:#33383d;">38</div>
<div class="t" style="left:2510.5px;top:1060.6px;font-size:30px;line-height:30px;color:#33383d;">0.05673</div>
<div class="t" style="left:2690.5px;top:1060.6px;font-size:30px;line-height:30px;color:#33383d;">3</div>
<div class="t" style="left:295.5px;top:1148.6px;font-size:30px;line-height:30px;color:#33383d;">crimson-sweep-26</div>
<div class="t" style="left:929.5px;top:1148.6px;font-size:30px;line-height:30px;color:#33383d;">finished</div>
<div class="t" style="left:1108.5px;top:1148.6px;font-size:30px;line-height:30px;color:#a9a9a9;">Add notes...</div>
<div class="t" style="left:1471px;top:1148.6px;font-size:30px;line-height:30px;color:#33383d;">carey</div>
<div class="t" style="left:1611px;top:1148.6px;font-size:30px;line-height:30px;color:#33383d;">5m 16s</div>
<div class="t" style="left:1790.5px;top:1148.6px;font-size:30px;line-height:30px;color:#1781b1;">q9dwgphr</div>
<div class="t" style="left:1970.5px;top:1148.6px;font-size:30px;line-height:30px;color:#33383d;">406</div>
<div class="t" style="left:2150.5px;top:1148.6px;font-size:30px;line-height:30px;color:#33383d;">23</div>
<div class="t" style="left:2330.5px;top:1148.6px;font-size:30px;line-height:30px;color:#33383d;">50</div>
<div class="t" style="left:2510.5px;top:1148.6px;font-size:30px;line-height:30px;color:#33383d;">0.3794</div>
<div class="t" style="left:2690.5px;top:1148.6px;font-size:30px;line-height:30px;color:#33383d;">6</div>
<div class="t" style="left:295.5px;top:1236.6px;font-size:30px;line-height:30px;color:#33383d;">giddy-sweep-19</div>
<div class="t" style="left:929.5px;top:1236.6px;font-size:30px;line-height:30px;color:#33383d;">finished</div>
<div class="t" style="left:1108.5px;top:1236.6px;font-size:30px;line-height:30px;color:#a9a9a9;">Add notes...</div>
<div class="t" style="left:1471px;top:1236.6px;font-size:30px;line-height:30px;color:#33383d;">carey</div>
<div class="t" style="left:1611px;top:1236.6px;font-size:30px;line-height:30px;color:#33383d;">5m 53s</div>
<div class="t" style="left:1790.5px;top:1236.6px;font-size:30px;line-height:30px;color:#1781b1;">q9dwgphr</div>
<div class="t" style="left:1970.5px;top:1236.6px;font-size:30px;line-height:30px;color:#33383d;">166</div>
<div class="t" style="left:2150.5px;top:1236.6px;font-size:30px;line-height:30px;color:#33383d;">30</div>
<div class="t" style="left:2330.5px;top:1236.6px;font-size:30px;line-height:30px;color:#33383d;">46</div>
<div class="t" style="left:2510.5px;top:1236.6px;font-size:30px;line-height:30px;color:#33383d;">0.3923</div>
<div class="t" style="left:2690.5px;top:1236.6px;font-size:30px;line-height:30px;color:#33383d;">5</div>
<div class="t" style="left:295.5px;top:1324.6px;font-size:30px;line-height:30px;color:#33383d;">avid-sweep-17</div>
<div class="t" style="left:929.5px;top:1324.6px;font-size:30px;line-height:30px;color:#33383d;">finished</div>
<div class="t" style="left:1108.5px;top:1324.6px;font-size:30px;line-height:30px;color:#a9a9a9;">Add notes...</div>
<div class="t" style="left:1471px;top:1324.6px;font-size:30px;line-height:30px;color:#33383d;">carey</div>
<div class="t" style="left:1611px;top:1324.6px;font-size:30px;line-height:30px;color:#33383d;">6m 45s</div>
<div class="t" style="left:1790.5px;top:1324.6px;font-size:30px;line-height:30px;color:#1781b1;">q9dwgphr</div>
<div class="t" style="left:1970.5px;top:1324.6px;font-size:30px;line-height:30px;color:#33383d;">159</div>
<div class="t" style="left:2150.5px;top:1324.6px;font-size:30px;line-height:30px;color:#33383d;">28</div>
<div class="t" style="left:2330.5px;top:1324.6px;font-size:30px;line-height:30px;color:#33383d;">27</div>
<div class="t" style="left:2510.5px;top:1324.6px;font-size:30px;line-height:30px;color:#33383d;">0.1288</div>
<div class="t" style="left:2690.5px;top:1324.6px;font-size:30px;line-height:30px;color:#33383d;">6</div>
<div class="t" style="left:295.5px;top:1412.6px;font-size:30px;line-height:30px;color:#33383d;">dry-sweep-13</div>
<div class="t" style="left:929.5px;top:1412.6px;font-size:30px;line-height:30px;color:#33383d;">finished</div>
<div class="t" style="left:1108.5px;top:1412.6px;font-size:30px;line-height:30px;color:#a9a9a9;">Add notes...</div>
<div class="t" style="left:1471px;top:1412.6px;font-size:30px;line-height:30px;color:#33383d;">carey</div>
<div class="t" style="left:1611px;top:1412.6px;font-size:30px;line-height:30px;color:#33383d;">5m 44s</div>
<div class="t" style="left:1790.5px;top:1412.6px;font-size:30px;line-height:30px;color:#1781b1;">q9dwgphr</div>
<div class="t" style="left:1970.5px;top:1412.6px;font-size:30px;line-height:30px;color:#33383d;">147</div>
<div class="t" style="left:2150.5px;top:1412.6px;font-size:30px;line-height:30px;color:#33383d;">28</div>
<div class="t" style="left:2330.5px;top:1412.6px;font-size:30px;line-height:30px;color:#33383d;">33</div>
<div class="t" style="left:2510.5px;top:1412.6px;font-size:30px;line-height:30px;color:#33383d;">0.1713</div>
<div class="t" style="left:2690.5px;top:1412.6px;font-size:30px;line-height:30px;color:#33383d;">5</div>
<div class="t" style="left:295.5px;top:1500.6px;font-size:30px;line-height:30px;color:#33383d;">feasible-sweep-11</div>
<div class="t" style="left:929.5px;top:1500.6px;font-size:30px;line-height:30px;color:#33383d;">finished</div>
<div class="t" style="left:1108.5px;top:1500.6px;font-size:30px;line-height:30px;color:#a9a9a9;">Add notes...</div>
<div class="t" style="left:1471px;top:1500.6px;font-size:30px;line-height:30px;color:#33383d;">carey</div>
<div class="t" style="left:1611px;top:1500.6px;font-size:30px;line-height:30px;color:#33383d;">5m 13s</div>
<div class="t" style="left:1790.5px;top:1500.6px;font-size:30px;line-height:30px;color:#1781b1;">q9dwgphr</div>
<div class="t" style="left:1970.5px;top:1500.6px;font-size:30px;line-height:30px;color:#33383d;">28</div>
<div class="t" style="left:2150.5px;top:1500.6px;font-size:30px;line-height:30px;color:#33383d;">16</div>
<div class="t" style="left:2330.5px;top:1500.6px;font-size:30px;line-height:30px;color:#33383d;">57</div>
<div class="t" style="left:2510.5px;top:1500.6px;font-size:30px;line-height:30px;color:#33383d;">0.3775</div>
<div class="t" style="left:2690.5px;top:1500.6px;font-size:30px;line-height:30px;color:#33383d;">3</div>
<div class="t" style="left:295.5px;top:1588.6px;font-size:30px;line-height:30px;color:#33383d;">bumbling-sweep-60</div>
<div class="t" style="left:929.5px;top:1588.6px;font-size:30px;line-height:30px;color:#33383d;">finished</div>
<div class="t" style="left:1108.5px;top:1588.6px;font-size:30px;line-height:30px;color:#a9a9a9;">Add notes...</div>
<div class="t" style="left:1471px;top:1588.6px;font-size:30px;line-height:30px;color:#33383d;">carey</div>
<div class="t" style="left:1611px;top:1588.6px;font-size:30px;line-height:30px;color:#33383d;">5m 26s</div>
<div class="t" style="left:1790.5px;top:1588.6px;font-size:30px;line-height:30px;color:#1781b1;">mz23v5vu</div>
<div class="t" style="left:1970.5px;top:1588.6px;font-size:30px;line-height:30px;color:#33383d;">72</div>
<div class="t" style="left:2150.5px;top:1588.6px;font-size:30px;line-height:30px;color:#33383d;">12</div>
<div class="t" style="left:2330.5px;top:1588.6px;font-size:30px;line-height:30px;color:#33383d;">56</div>
<div class="t" style="left:2510.5px;top:1588.6px;font-size:30px;line-height:30px;color:#33383d;">0.06053</div>
<div class="t" style="left:2690.5px;top:1588.6px;font-size:30px;line-height:30px;color:#33383d;">6</div>
<div class="t" style="left:295.5px;top:1676.6px;font-size:30px;line-height:30px;color:#33383d;">jumping-sweep-52</div>
<div class="t" style="left:929.5px;top:1676.6px;font-size:30px;line-height:30px;color:#33383d;">finished</div>
<div class="t" style="left:1108.5px;top:1676.6px;font-size:30px;line-height:30px;color:#a9a9a9;">Add notes...</div>
<div class="t" style="left:1471px;top:1676.6px;font-size:30px;line-height:30px;color:#33383d;">carey</div>
<div class="t" style="left:1611px;top:1676.6px;font-size:30px;line-height:30px;color:#33383d;">8m 53s</div>
<div class="t" style="left:1790.5px;top:1676.6px;font-size:30px;line-height:30px;color:#1781b1;">mz23v5vu</div>
<div class="t" style="left:1970.5px;top:1676.6px;font-size:30px;line-height:30px;color:#33383d;">45</div>
<div class="t" style="left:2150.5px;top:1676.6px;font-size:30px;line-height:30px;color:#33383d;">19</div>
<div class="t" style="left:2330.5px;top:1676.6px;font-size:30px;line-height:30px;color:#33383d;">41</div>
<div class="t" style="left:2510.5px;top:1676.6px;font-size:30px;line-height:30px;color:#33383d;">0.1881</div>
<div class="t" style="left:2690.5px;top:1676.6px;font-size:30px;line-height:30px;color:#33383d;">6</div>
<div class="t" style="left:295.5px;top:1764.6px;font-size:30px;line-height:30px;color:#33383d;">colorful-sweep-39</div>
<div class="t" style="left:929.5px;top:1764.6px;font-size:30px;line-height:30px;color:#33383d;">finished</div>
<div class="t" style="left:1108.5px;top:1764.6px;font-size:30px;line-height:30px;color:#a9a9a9;">Add notes...</div>
<div class="t" style="left:1471px;top:1764.6px;font-size:30px;line-height:30px;color:#33383d;">carey</div>
<div class="t" style="left:1611px;top:1764.6px;font-size:30px;line-height:30px;color:#33383d;">6m 5s</div>
<div class="t" style="left:1790.5px;top:1764.6px;font-size:30px;line-height:30px;color:#1781b1;">mz23v5vu</div>
<div class="t" style="left:1970.5px;top:1764.6px;font-size:30px;line-height:30px;color:#33383d;">157</div>
<div class="t" style="left:2150.5px;top:1764.6px;font-size:30px;line-height:30px;color:#33383d;">23</div>
<div class="t" style="left:2330.5px;top:1764.6px;font-size:30px;line-height:30px;color:#33383d;">52</div>
<div class="t" style="left:2510.5px;top:1764.6px;font-size:30px;line-height:30px;color:#33383d;">0.2524</div>
<div class="t" style="left:2690.5px;top:1764.6px;font-size:30px;line-height:30px;color:#33383d;">6</div>
</body></html>
